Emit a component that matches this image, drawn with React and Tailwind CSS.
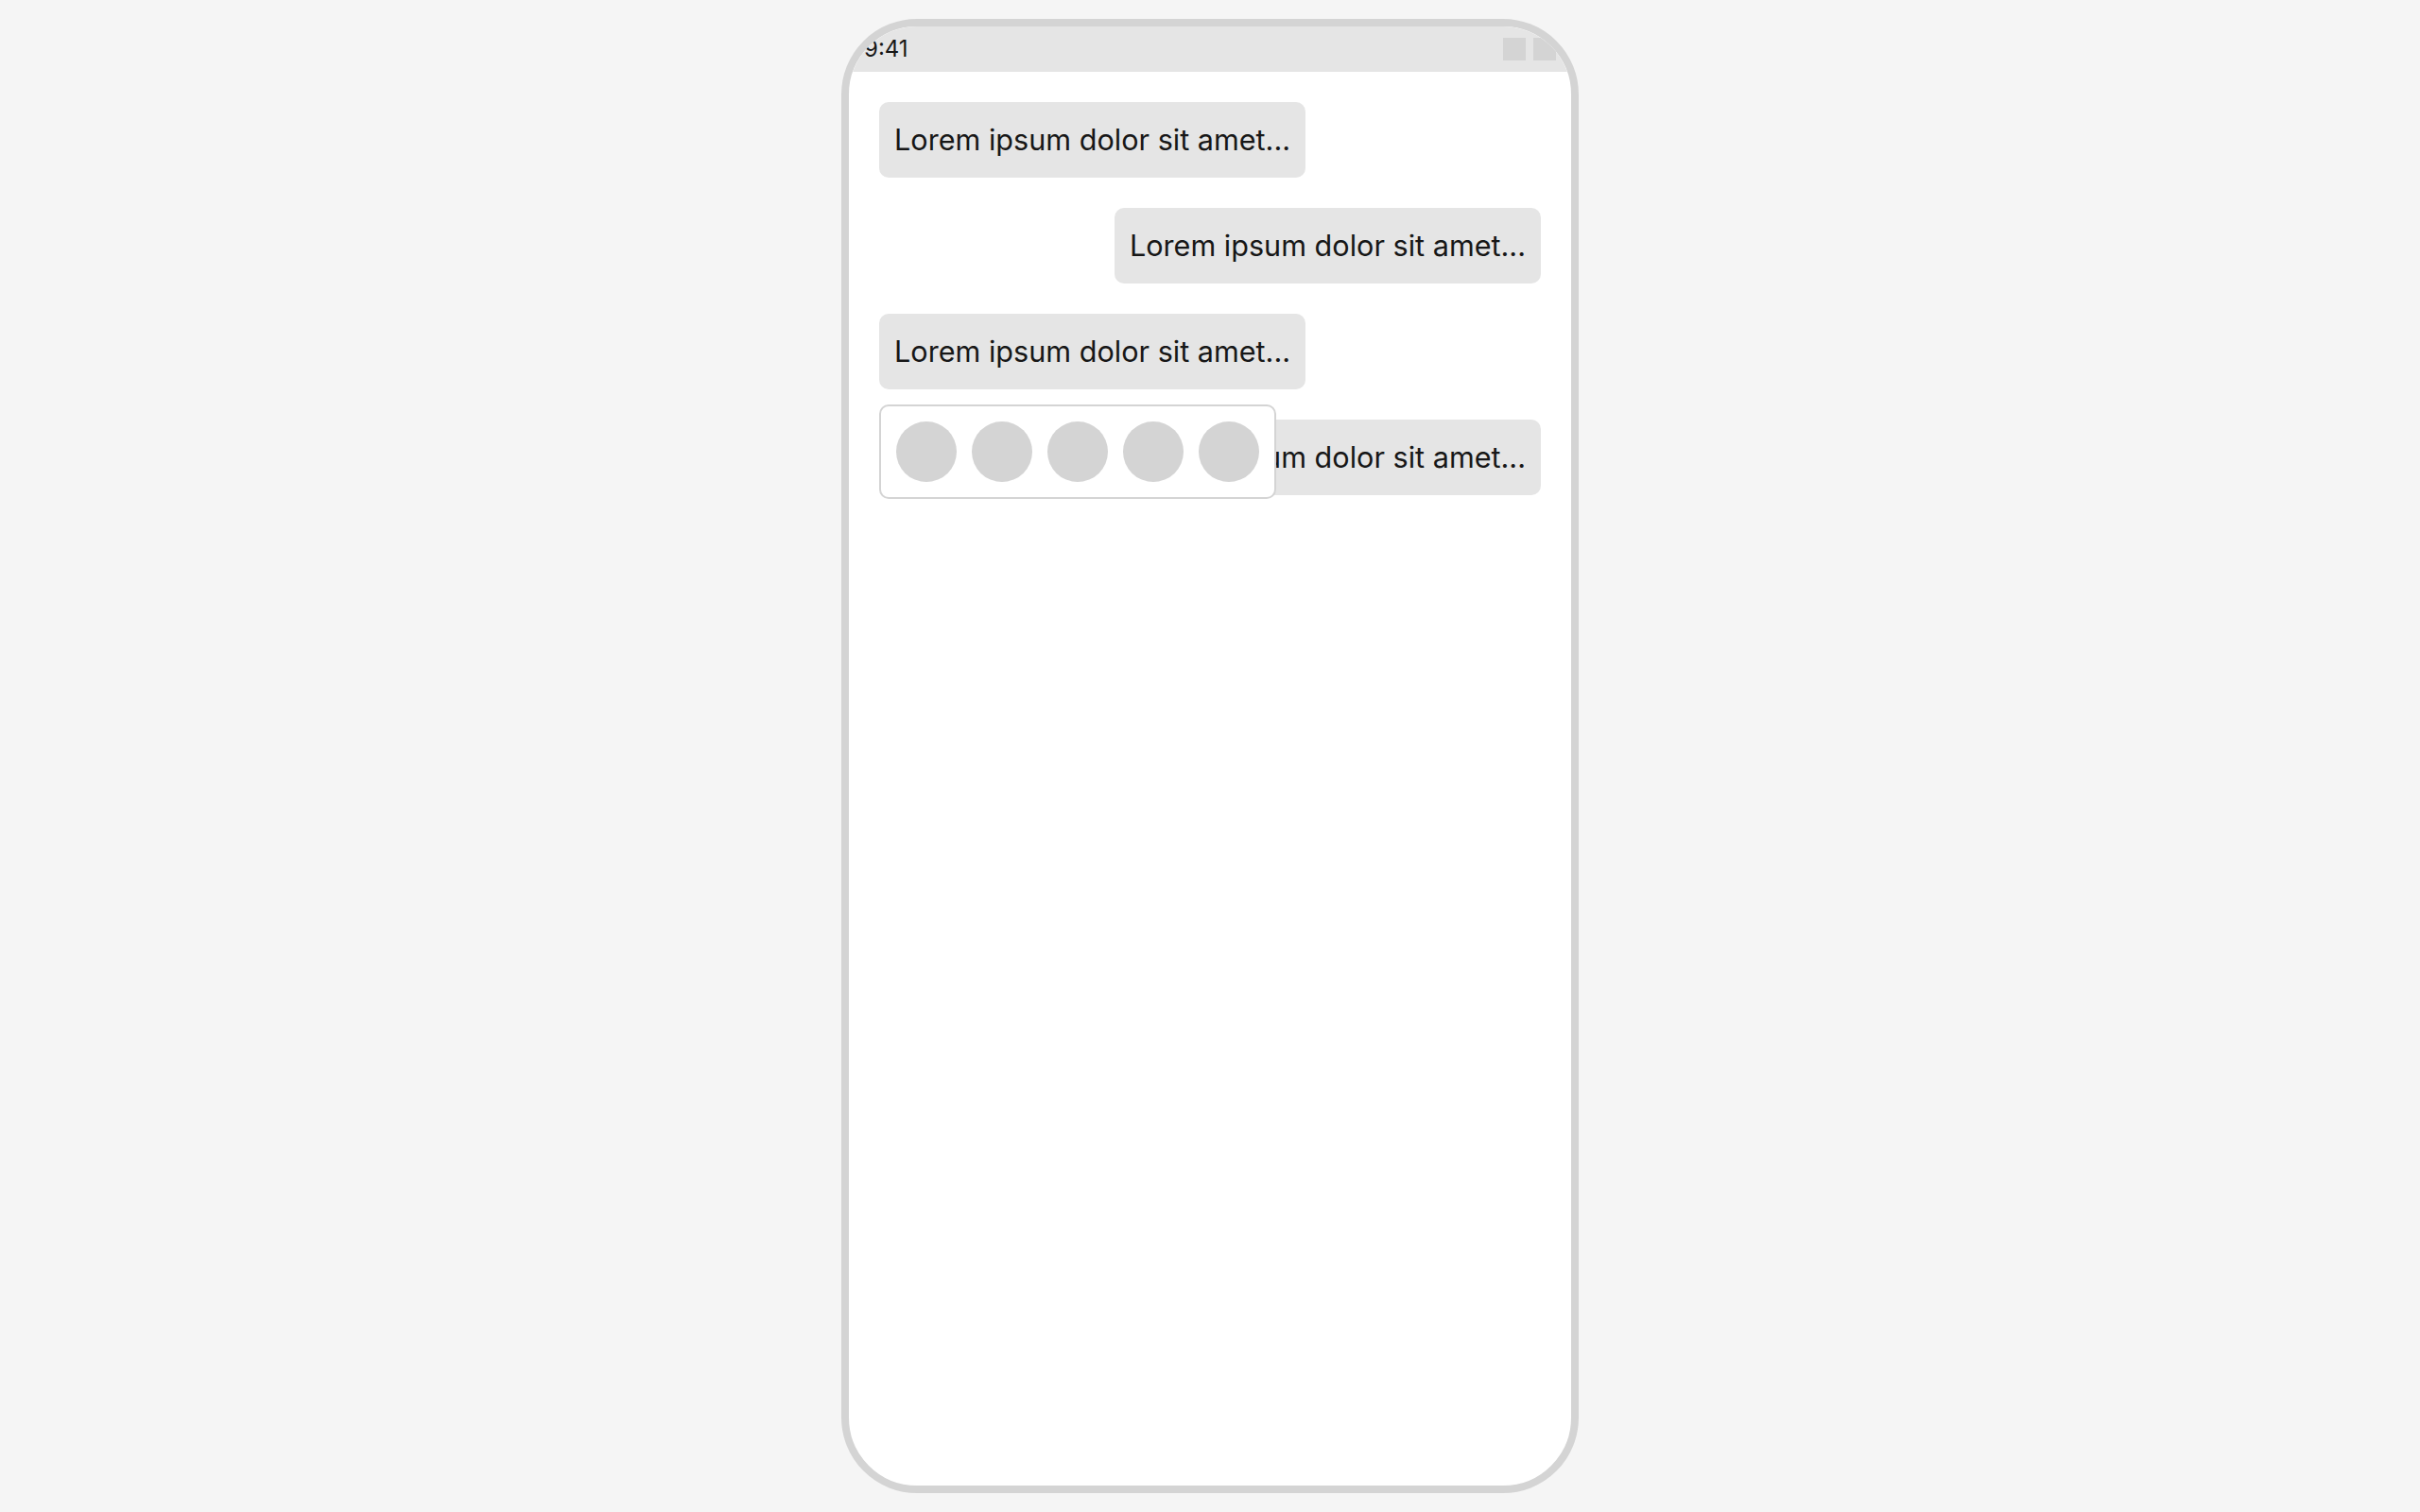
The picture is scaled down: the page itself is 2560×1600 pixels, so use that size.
import React from "react";

const messages = [
  { id: 1, side: "left" },
  { id: 2, side: "right" },
  { id: 3, side: "left" },
  { id: 4, side: "right", picker: true },
];

const Bubble = ({ side }) => (
  <div
    className={`rounded-[10px] bg-[#e5e5e5] px-[16px] py-[20px] text-[30.6px] leading-[40px] text-[#171717] ${
      side === "right" ? "self-end" : "self-start"
    }`}
  >
    Lorem ipsum dolor sit amet...
  </div>
);

const ReactionPicker = () => (
  <div className="absolute left-0 -top-[16px] flex gap-[16px] rounded-[10px] border-2 border-[#d4d4d4] bg-white p-[16px]">
    {Array.from({ length: 5 }, (_, i) => (
      <div key={i} className="h-[64px] w-[64px] rounded-full bg-[#d4d4d4]"></div>
    ))}
  </div>
);

export default function App() {
  return (
    <div
      className="flex min-h-screen justify-center bg-[#f5f5f5] py-[20px]"
      style={{ fontFamily: "Inter, 'Noto Sans', sans-serif" }}
    >
      <div className="relative flex h-[1560px] w-[780px] flex-col overflow-hidden rounded-[80px] border-8 border-[#d4d4d4] bg-white">
        {/* Status bar */}
        <div className="flex h-[48px] shrink-0 items-center justify-between bg-[#e5e5e5] px-[16px]">
          <span className="text-[24px] leading-none text-[#171717]">9:41</span>
          <div className="flex gap-[8px]">
            <div className="h-[24px] w-[24px] bg-[#d4d4d4]"></div>
            <div className="h-[24px] w-[24px] bg-[#d4d4d4]"></div>
          </div>
        </div>

        {/* Chat */}
        <div className="flex flex-col gap-[32px] p-[32px]">
          {messages.map((m) => (
            <div key={m.id} className="relative flex flex-col">
              <Bubble side={m.side} />
              {m.picker && <ReactionPicker />}
            </div>
          ))}
        </div>
      </div>
    </div>
  );
}
